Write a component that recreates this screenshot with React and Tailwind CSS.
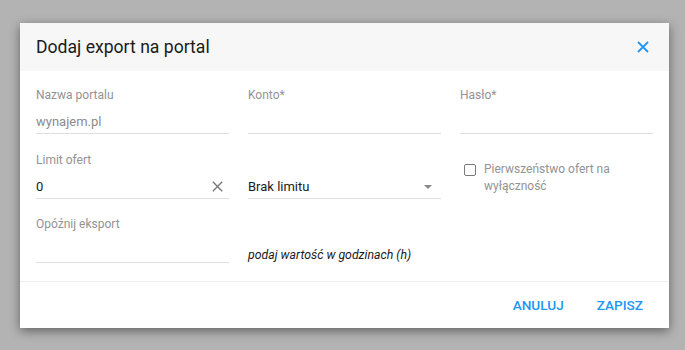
import React from 'react'

function Field({ label, children, className = '' }) {
  return (
    <div className={className}>
      <div className="h-4 text-[12px] leading-4 text-[#939393]">{label}</div>
      <div className="mt-2 flex h-[23px] items-center border-b border-[#e0e0e0] text-[13px] leading-5">
        {children}
      </div>
    </div>
  )
}

function App() {
  return (
    <div
      className="min-h-screen bg-[#b3b3b3] px-5 pt-[23px]"
      style={{ fontFamily: 'Roboto, "Noto Sans", Arial, sans-serif' }}
    >
      <div className="w-[649px] bg-white shadow-[0_3px_10px_rgba(0,0,0,0.45)]">
        <header className="flex h-12 items-center justify-between bg-[#f7f7f7] pl-4 pr-5">
          <h1 className="text-[17.6px] leading-6 text-[#1a1a1a]">Dodaj export na portal</h1>
          <svg width="12" height="12" viewBox="0 0 12 12" className="text-[#2196f3]">
            <path d="M1 1L11 11M11 1L1 11" stroke="currentColor" strokeWidth="1.8" />
          </svg>
        </header>

        <main className="grid grid-cols-3 gap-x-[19px] gap-y-[17.5px] px-4 pt-4 pb-[18px]">
          <Field label="Nazwa portalu">
            <span className="text-[#8c8c8c]">wynajem.pl</span>
          </Field>
          <Field label="Konto*" />
          <Field label="Hasło*" />

          <Field label="Limit ofert">
            <span className="flex-1 text-[#1a1a1a]">0</span>
            <svg width="11" height="11" viewBox="0 0 11 11" className="mr-[6px] text-[#7a7a7a]">
              <path d="M0.8 0.8L10.2 10.2M10.2 0.8L0.8 10.2" stroke="currentColor" strokeWidth="1.4" />
            </svg>
          </Field>
          <Field label="">
            <span className="flex-1 text-[#1a1a1a]">Brak limitu</span>
            <svg width="8" height="4" viewBox="0 0 8 4" className="mr-[9px] text-[#8a8a8a]">
              <path d="M0 0H8L4 4Z" fill="currentColor" />
            </svg>
          </Field>
          <div className="flex gap-2 pt-[9px] pl-1">
            <span className="mt-[3px] h-3 w-3 shrink-0 rounded-[2px] border-[1.5px] border-[#7a7a7a]" />
            <span className="text-[12px] leading-[17px] text-[#939393]">
              Pierwszeństwo ofert na wyłączność
            </span>
          </div>

          <Field label="Opóźnij eksport" />
          <div className="flex items-end">
            <span className="text-[12.3px] leading-4 italic text-[#1a1a1a]">
              podaj wartość w godzinach (h)
            </span>
          </div>
          <div />
        </main>

        <footer className="flex h-[47px] items-center justify-end gap-[33px] border-t border-[#f0f0f0] pr-[26px]">
          <button className="text-[13.6px] font-medium text-[#2196f3]">ANULUJ</button>
          <button className="text-[13.6px] font-medium text-[#2196f3]">ZAPISZ</button>
        </footer>
      </div>
    </div>
  )
}

export default App
